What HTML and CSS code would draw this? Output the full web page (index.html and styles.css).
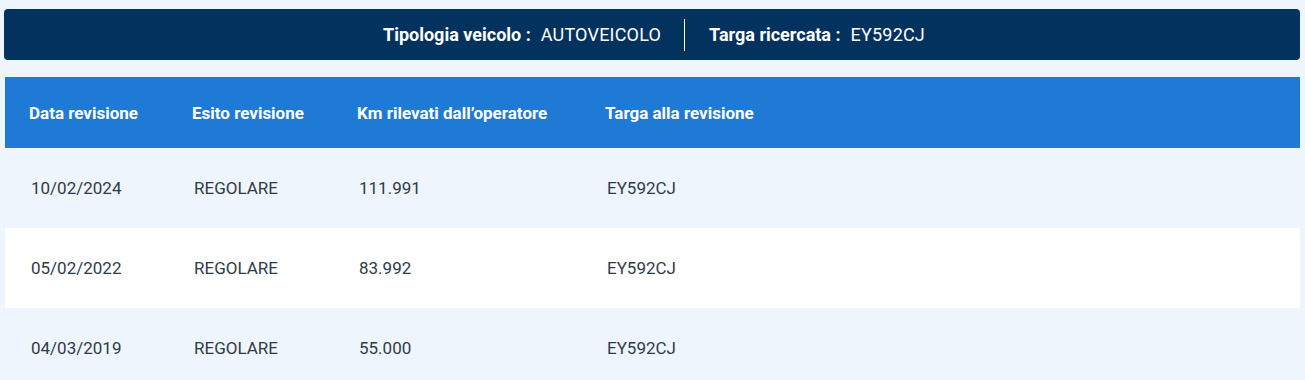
FILE: index.html
```html
<!DOCTYPE html>
<html lang="it">
<head>
<meta charset="utf-8">
<title>Revisioni</title>
<link rel="stylesheet" href="styles.css">
</head>
<body>
<div class="summary">
  <div class="summary-item"><span class="label">Tipologia veicolo :</span> <span class="value">AUTOVEICOLO</span></div>
  <div class="divider"></div>
  <div class="summary-item"><span class="label">Targa ricercata :</span> <span class="value">EY592CJ</span></div>
</div>
<table class="rev-table">
  <thead>
    <tr>
      <th>Data revisione</th>
      <th>Esito revisione</th>
      <th>Km rilevati dall’operatore</th>
      <th>Targa alla revisione</th>
    </tr>
  </thead>
  <tbody>
    <tr><td>10/02/2024</td><td>REGOLARE</td><td>111.991</td><td>EY592CJ</td></tr>
    <tr><td>05/02/2022</td><td>REGOLARE</td><td>83.992</td><td>EY592CJ</td></tr>
    <tr><td>04/03/2019</td><td>REGOLARE</td><td>55.000</td><td>EY592CJ</td></tr>
  </tbody>
</table>
</body>
</html>
```
FILE: styles.css
```css
html, body {
  margin: 0;
  padding: 0;
  background: #eff5fc;
  font-family: Roboto, "Liberation Sans", sans-serif;
}
body {
  padding: 9px 5px 0 4px;
}
.summary {
  background: #04325f;
  border-radius: 4px;
  height: 51px;
  display: flex;
  align-items: center;
  justify-content: center;
  color: #fff;
  font-size: 18px;
  padding-left: 4px;
}
.summary-item {
  display: flex;
  gap: 10px;
  align-items: baseline;
}
.label { font-weight: 700; }
.value { font-weight: 400; letter-spacing: 0.2px; }
.divider {
  width: 1px;
  height: 32px;
  background: #fff;
  margin: 0 24px 0 23px;
}
.rev-table {
  margin: 17px 0 0 1px;
  width: calc(100% - 1px);
  border-collapse: collapse;
  table-layout: fixed;
  font-size: 17px;
}
.rev-table thead tr {
  background: #1f7ad5;
  height: 71px;
}
.rev-table th {
  color: #fff;
  font-weight: 700;
  text-align: left;
  padding: 0;
  white-space: nowrap;
}
.rev-table td {
  color: #2f3b47;
  padding: 0;
}
.rev-table tbody tr { height: 80px; }
.rev-table tbody tr:nth-child(odd) { background: #eff5fc; }
.rev-table tbody tr:nth-child(even) { background: #ffffff; }
.rev-table th:nth-child(1) { width: 163px; padding-left: 24px; }
.rev-table td:nth-child(1) { padding-left: 26px; }
.rev-table th:nth-child(2) { width: 165px; }
.rev-table th:nth-child(3) { width: 248px; }
.rev-table td:nth-child(n+2) { padding-left: 2px; }
```
